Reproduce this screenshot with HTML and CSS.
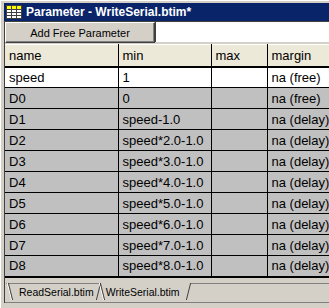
FILE: index.html
```html
<!DOCTYPE html>
<html lang="en">
<head>
  <meta charset="UTF-8">
  <title>Parameter - WriteSerial.btim*</title>
  <link rel="stylesheet" href="styles.css">
</head>
<body>
  <div class="window">
    <div class="titlebar">
      <svg class="title-icon" width="16" height="14" viewBox="0 0 16 14">
        <rect x="0.5" y="0.5" width="15" height="13" fill="#fff" stroke="#404040"/>
        <rect x="1" y="1" width="14" height="3" fill="#ffff00"/>
        <path d="M1 4.5H15M1 7.5H15M1 10.5H15M5.5 1V13M10.5 1V13" stroke="#404040" fill="none"/>
      </svg>
      <span class="title-text">Parameter - WriteSerial.btim*</span>
    </div>

    <div class="client">
      <div class="toolbar">
        <button class="add-btn">Add Free Parameter</button>
        <div class="name-field"></div>
      </div>

      <div class="grid-wrap">
        <table class="grid">
          <colgroup>
            <col class="c-name">
            <col class="c-min">
            <col class="c-max">
            <col class="c-margin">
          </colgroup>
          <thead>
            <tr>
              <th>name</th>
              <th>min</th>
              <th>max</th>
              <th>margin</th>
            </tr>
          </thead>
          <tbody>
            <tr class="free"><td>speed</td><td>1</td><td></td><td>na (free)</td></tr>
            <tr><td>D0</td><td>0</td><td></td><td>na (free)</td></tr>
            <tr><td>D1</td><td>speed-1.0</td><td></td><td>na (delay)</td></tr>
            <tr><td>D2</td><td>speed*2.0-1.0</td><td></td><td>na (delay)</td></tr>
            <tr><td>D3</td><td>speed*3.0-1.0</td><td></td><td>na (delay)</td></tr>
            <tr><td>D4</td><td>speed*4.0-1.0</td><td></td><td>na (delay)</td></tr>
            <tr><td>D5</td><td>speed*5.0-1.0</td><td></td><td>na (delay)</td></tr>
            <tr><td>D6</td><td>speed*6.0-1.0</td><td></td><td>na (delay)</td></tr>
            <tr><td>D7</td><td>speed*7.0-1.0</td><td></td><td>na (delay)</td></tr>
            <tr><td>D8</td><td>speed*8.0-1.0</td><td></td><td>na (delay)</td></tr>
          </tbody>
        </table>
      </div>

      <div class="tabs">
        <span class="tab first">ReadSerial.btim</span>
        <span class="tab active">WriteSerial.btim</span>
      </div>
    </div>
  </div>
</body>
</html>
```

FILE: styles.css
```css
html, body {
  margin: 0;
  padding: 0;
  overflow: hidden;
  background: #d4d0c8;
}
body {
  font-family: "Liberation Sans", Arial, sans-serif;
  width: 329px;
  height: 308px;
}
.window {
  height: 308px;
  padding: 2px 0 0 3px;
  box-sizing: border-box;
  border-top: 1px solid #ffffff;
  border-left: 1px solid #ffffff;
}
.titlebar {
  height: 18px;
  background: #0a246a;
  display: flex;
  align-items: center;
  padding-left: 2px;
}
.title-icon {
  flex: none;
  margin-right: 4px;
}
.title-text {
  color: #ffffff;
  font-weight: bold;
  font-size: 12px;
  white-space: nowrap;
}

.client {
  border-top: 1px solid #404040;
  border-left: 1px solid #404040;
}
.toolbar {
  display: flex;
  height: 22px;
}
.add-btn {
  width: 150px;
  height: 21px;
  margin: 0;
  padding: 0;
  font-family: "Liberation Sans", Arial, sans-serif;
  font-size: 11px;
  color: #000000;
  background: #d4d0c8;
  border: 1px solid;
  border-color: #ffffff #404040 #404040 #ffffff;
  box-shadow: inset -1px -1px 0 #808080;
}
.name-field {
  flex: 1;
  height: 20px;
  background: #ffffff;
  border-left: 1px solid #404040;
}

.grid-wrap {
  overflow: hidden;
}
.grid {
  border-collapse: collapse;
  table-layout: fixed;
  width: 440px;
  font-size: 13px;
}
.c-name { width: 113px; }
.c-min { width: 93px; }
.c-max { width: 56px; }
.c-margin { width: 178px; }
.grid th,
.grid td {
  padding: 0 0 0 4px;
  text-align: left;
  font-weight: normal;
  white-space: nowrap;
  overflow: hidden;
  border-right: 1px solid #000000;
  border-bottom: 1px solid #000000;
  box-sizing: border-box;
}
.grid th {
  height: 22px;
  background: #ece9d8;
  border-top: 1px solid #ffffff;
  border-bottom: 2px solid #000000;
}
.grid td {
  height: 21px;
  background: #c0c0c0;
}
.grid tr.free td {
  background: #ffffff;
}
.grid tbody tr:last-child td {
  border-bottom: 2px solid #000000;
}

.tabs {
  display: flex;
  height: 25px;
  padding: 5px 0 0 1px;
  box-sizing: border-box;
  border-bottom: 1px solid #808080;
}
.tabs::after {
  content: "";
  flex: 1;
  height: 0;
  border-top: 1px solid #808080;
}
.tab {
  position: relative;
  height: 17px;
  line-height: 16px;
  padding: 0 10px 0 8px;
  font-size: 10.5px;
  color: #000000;
  border-top: 1px solid #808080;
  box-sizing: border-box;
}
.tab.first {
  padding: 0 6px 0 13px;
}
.tab::before,
.tab::after {
  content: "";
  position: absolute;
  top: -1px;
  bottom: 0;
  width: 0;
}
.tab::before {
  left: 4px;
  border-left: 1px solid #404040;
  box-shadow: -1px 0 0 #ffffff;
  transform: skewX(14deg);
}
.tab::after {
  right: 1px;
  border-right: 1px solid #404040;
  transform: skewX(-14deg);
}
.tab.active {
  border-top-color: transparent;
  margin-left: -2px;
}
```
